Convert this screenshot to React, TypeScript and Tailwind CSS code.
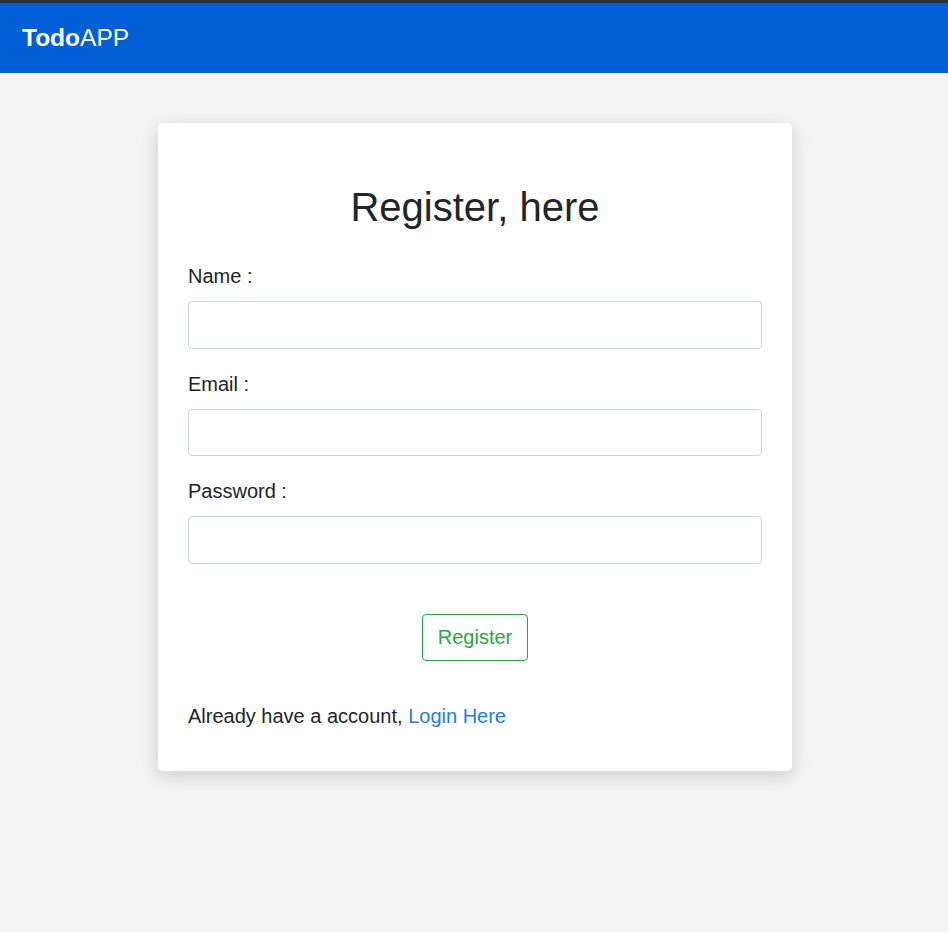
import React from 'react';

const Field: React.FC<{ label: string; type: string; className?: string }> = ({ label, type, className }) => (
    <div className={className}>
        <label className="block text-[20px] leading-[30px] text-[#212529]">{label}</label>
        <input
            type={type}
            className="mt-[10px] block w-full h-[47.5px] px-4 text-[20px] bg-white border border-[#ced4da] rounded-[4px] outline-none"
        />
    </div>
);

export default function App() {
    return (
        <div className="min-h-[932px] bg-[#f4f4f4] font-['Liberation_Sans',Arial,sans-serif] text-[#212529]">
            <div className="h-[3px] bg-[#2b2d30]" />
            <nav className="h-[70px] bg-[#005fd7] flex items-center px-[22px]">
                <span className="text-white text-[24.5px] leading-none">
                    <b>Todo</b>APP
                </span>
            </nav>
            <div className="flex justify-center pt-[50px] pl-[2px]">
                <div className="w-[634px] bg-white rounded-[5px] shadow-[0_5px_20px_rgba(0,0,0,0.16)] px-[30px] pt-[60px] pb-[40px]">
                    <h1 className="text-center text-[40px] leading-[48px]">Register, here</h1>
                    <Field label="Name :" type="text" className="mt-[30px]" />
                    <Field label="Email :" type="email" className="mt-[20px]" />
                    <Field label="Password :" type="password" className="mt-[20px]" />
                    <div className="flex justify-center mt-[50px]">
                        <button className="h-[47px] px-[15px] text-[20px] text-[#28a745] border border-[#28a745] rounded-[4px] bg-white">
                            Register
                        </button>
                    </div>
                    <p className="mt-[40px] text-[20px] leading-[30px]">
                        Already have a account, <a className="text-[#1f7bf0]">Login Here</a>
                    </p>
                </div>
            </div>
        </div>
    );
}
